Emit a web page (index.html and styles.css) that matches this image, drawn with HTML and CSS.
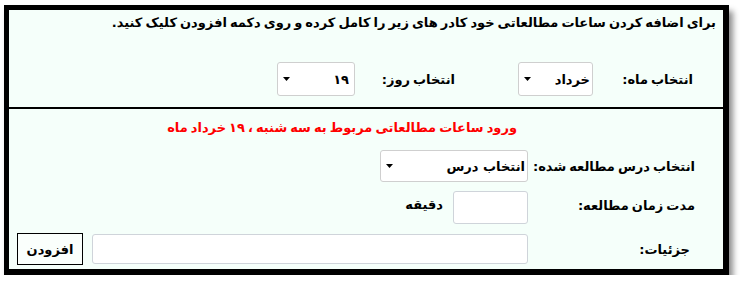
FILE: index.html
```html
<!DOCTYPE html>
<html lang="fa" dir="rtl">
<head>
<meta charset="utf-8">
<title>افزودن ساعات مطالعه</title>
<link rel="stylesheet" href="styles.css">
</head>
<body>
<div class="page">
  <div class="box">
    <section class="top">
      <p class="intro">برای اضافه کردن ساعات مطالعاتی خود کادر های زیر را کامل کرده و روی دکمه افزودن کلیک کنید.</p>
      <div class="date-row">
        <label class="lbl-month">انتخاب ماه:</label>
        <div class="sel sel-month">
          <select><option>خرداد</option></select>
          <svg class="caret" viewBox="0 0 7 4" width="7" height="4"><polygon points="0,0 7,0 3.5,4" fill="#000"/></svg>
        </div>
        <label class="lbl-day">انتخاب روز:</label>
        <div class="sel sel-day">
          <select><option>۱۹</option></select>
          <svg class="caret" viewBox="0 0 7 4" width="7" height="4"><polygon points="0,0 7,0 3.5,4" fill="#000"/></svg>
        </div>
      </div>
    </section>
    <section class="bottom">
      <p class="notice">ورود ساعات مطالعاتی مربوط به سه شنبه ، ۱۹ خرداد ماه</p>
      <div class="form">
        <label class="lbl">انتخاب درس مطالعه شده:</label>
        <div class="ctl">
          <div class="sel sel-course">
            <select><option>انتخاب درس</option></select>
            <svg class="caret" viewBox="0 0 7 4" width="7" height="4"><polygon points="0,0 7,0 3.5,4" fill="#000"/></svg>
          </div>
        </div>
        <label class="lbl lbl-time">مدت زمان مطالعه:</label>
        <div class="ctl">
          <input class="inp inp-time" type="text">
          <span class="unit">دقیقه</span>
        </div>
        <label class="lbl lbl-detail">جزئیات:</label>
        <div class="ctl">
          <input class="inp inp-detail" type="text">
          <button class="btn" type="button">افزودن</button>
        </div>
      </div>
    </section>
  </div>
</div>
</body>
</html>
```

FILE: styles.css
```css
html, body {
  margin: 0;
  padding: 0;
  background: #ffffff;
}

body {
  font-family: "DejaVu Sans", "Noto Sans", sans-serif;
  font-weight: bold;
  font-size: 13px;
  word-spacing: -1.5px;
  color: #000;
}

.page {
  padding: 5px 12px 0 4px;
}

.box {
  box-sizing: border-box;
  height: 270px;
  background: #f5fffa;
  border-style: solid;
  border-color: #000;
  border-width: 5px 6px 6px 5px;
  box-shadow: 4px 6px 6px rgba(0, 0, 0, 0.45);
  direction: rtl;
}

.top {
  box-sizing: border-box;
  height: 99px;
  border-bottom: 2px solid #000;
  padding-top: 3px;
}

.intro {
  margin: 0;
  padding-right: 7px;
  line-height: 20px;
  white-space: nowrap;
}

.date-row {
  display: flex;
  align-items: center;
  margin-top: 29px;
}

.lbl-month {
  box-sizing: border-box;
  width: 130px;
  padding-right: 30px;
  flex: none;
}

.lbl-day {
  box-sizing: border-box;
  width: 163px;
  padding-right: 63px;
  flex: none;
}

.sel {
  position: relative;
  flex: none;
}

.sel select {
  display: block;
  box-sizing: border-box;
  width: 100%;
  height: 100%;
  margin: 0;
  -webkit-appearance: none;
  appearance: none;
  background: #fff;
  border: 1px solid #cfcfcf;
  border-radius: 3px;
  font: inherit;
  color: #000;
  padding: 0 2px 0 16px;
  text-align: right;
  direction: rtl;
}

.caret {
  position: absolute;
  left: 6px;
  top: 50%;
  margin-top: -2px;
  display: block;
}

.sel-month { width: 75px; height: 34px; }
.sel-day { width: 78px; height: 34px; }
.sel-day select { padding-right: 5px; }
.sel-course { width: 148px; height: 32px; }

.bottom {
  padding-top: 9px;
}

.notice {
  margin: 0;
  padding-right: 206px;
  line-height: 20px;
  color: #ff0000;
  white-space: nowrap;
}

.form {
  display: grid;
  grid-template-columns: 195px 1fr;
  grid-template-rows: 32px 33px 32px;
  row-gap: 9px;
  margin-top: 12px;
}

.lbl {
  box-sizing: border-box;
  padding-right: 28px;
  align-self: center;
  white-space: nowrap;
}

.lbl-time {
  margin-top: -4px;
}

.lbl-detail {
  padding-right: 33px;
}

.ctl {
  display: flex;
  align-items: center;
  gap: 10px;
}

.inp {
  box-sizing: border-box;
  margin: 0;
  background: #fff;
  border: 1px solid #cfd4da;
  border-radius: 3px;
  font: inherit;
}

.inp-time {
  width: 75px;
  height: 33px;
}

.unit {
  line-height: 20px;
  margin-top: -6px;
}

.inp-detail {
  width: 436px;
  height: 30px;
}

.btn {
  box-sizing: border-box;
  width: 66px;
  height: 32px;
  margin: 0;
  margin-right: -1px;
  background: #fafffc;
  border: 1px solid #000;
  border-radius: 0;
  font: inherit;
  color: #000;
  padding: 0;
}
```
